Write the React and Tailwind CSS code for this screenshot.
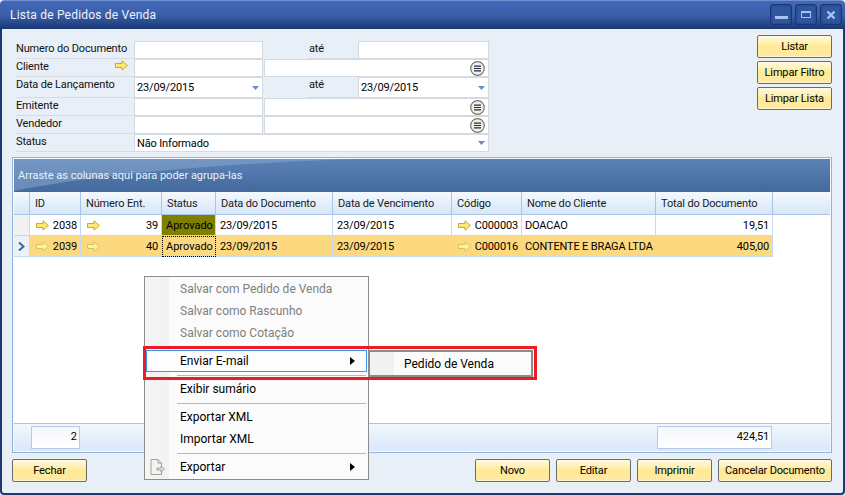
const font = { fontFamily: '"Roboto", "Liberation Sans", sans-serif' };

function Arrow({ pale = false, className = "" }) {
  return (
    <svg width="13" height="11" viewBox="0 0 13 11" className={"shrink-0 " + className}>
      <path
        d="M0.5 3.5H7V0.8L12.4 5.5L7 10.2V7.5H0.5Z"
        fill={pale ? "#fff0a8" : "#ffe873"}
        stroke={pale ? "#d8c25a" : "#c8ab2c"}
        strokeWidth="1"
      />
    </svg>
  );
}

function Caret() {
  return (
    <svg width="7" height="4" viewBox="0 0 7 4" className="shrink-0">
      <path d="M0 0H7L3.5 4Z" fill="#6a8cc4" />
    </svg>
  );
}

function ListBtn() {
  return (
    <svg width="15" height="15" viewBox="0 0 15 15" className="shrink-0">
      <circle cx="7.5" cy="7.5" r="6.8" fill="#f2efe3" stroke="#77766c" strokeWidth="1.2" />
      <path d="M4 5.2H11M4 7.5H11M4 9.8H11" stroke="#1c2d50" strokeWidth="1.2" />
    </svg>
  );
}

function Input({ w, children, caret, list, ml = "", textClass = "pt-px" }) {
  return (
    <div className={`${w} ${ml} h-full flex items-center bg-white border border-[#d3dae2] pl-[2px] pr-[3px] shrink-0 text-black text-[11px] tracking-[-0.15px]`}>
      <span className={`flex-1 truncate leading-none ${textClass}`}>{children}</span>
      {caret && <Caret />}
      {list && <ListBtn />}
    </div>
  );
}

function Label({ children, w = "w-[118px]", arrow, className = "" }) {
  return (
    <div className={`${w} shrink-0 h-full flex border-b border-[#d5dce3] pt-px text-[#111] text-[11px] tracking-[-0.15px] leading-[14px] ${className}`}>
      <span className="flex-1 truncate">{children}</span>
      {arrow && <Arrow className="mr-[6px]" />}
    </div>
  );
}

function Btn({ children, w = "w-[75px]" }) {
  return (
    <button className={`${w} h-[23px] shrink-0 rounded-[2px] border border-[#6c6c6c] bg-gradient-to-b from-[#fffbe3] via-[#ffe995] to-[#ffeaa6] shadow-[inset_0_-1px_0_#fff4c8] text-[11px] tracking-[-0.15px] text-black leading-none`}>
      {children}
    </button>
  );
}

function WinBtn({ children }) {
  return (
    <div className="w-[22px] h-[21px] rounded-[3px] border border-[#1b3672] bg-[#2f56a0] shadow-[inset_0_0_2px_#1b3672] flex items-center justify-center">
      {children}
    </div>
  );
}

const cols = "grid grid-cols-[16px_51px_81px_54px_117px_119px_70px_134px_117px_57px]";
const headers = ["", "ID", "Número Ent.", "Status", "Data do Documento", "Data de Vencimento", "Código", "Nome do Cliente", "Total do Documento", ""];

function Cell({ children, right, dotted, bg = "", className = "px-[3px]" }) {
  return (
    <div className={`h-[21px] flex items-center min-w-0 border-r border-b border-[#c8d9ef] text-[11px] tracking-[-0.15px] text-black leading-none whitespace-nowrap ${right ? "justify-end" : ""} ${bg} ${dotted ? "outline-1 outline-dotted outline-black -outline-offset-1" : ""} ${className}`}>
      {children}
    </div>
  );
}

function Row({ selected, id, num, code, name, total, date }) {
  const bg = selected ? "bg-[#fcd97f]" : "bg-white";
  const arrowCell = "justify-between pl-[6px] pr-[3px]";
  return (
    <div className={cols}>
      <div className={`h-[21px] border-r border-b border-[#c8d9ef] flex items-center justify-center ${selected ? "bg-[#eaf1f9]" : "bg-[#f1f1f1]"}`}>
        {selected && (
          <svg width="7" height="9" viewBox="0 0 7 9"><path d="M1 0.5L5.5 4.5L1 8.5" fill="none" stroke="#3e659c" strokeWidth="2" /></svg>
        )}
      </div>
      <Cell bg={bg} className={arrowCell}><Arrow pale={selected} /><span>{id}</span></Cell>
      <Cell bg={bg} className={arrowCell}><Arrow pale={selected} /><span>{num}</span></Cell>
      <Cell bg={selected ? "bg-[#fcd97f]" : "bg-[#7f7f00]"} dotted={selected} className="pl-[4px]">
        <span className="tracking-[0px]">Aprovado</span>
      </Cell>
      <Cell bg={bg} className="pl-[4px]">{date}</Cell>
      <Cell bg={bg} className="pl-[4px]">{date}</Cell>
      <Cell bg={bg} className={arrowCell}><Arrow pale={selected} /><span>{code}</span></Cell>
      <Cell bg={bg}>{name}</Cell>
      <Cell bg={bg} right>{total}</Cell>
    </div>
  );
}

function MenuItem({ children, disabled, sub, icon }) {
  return (
    <div className={`h-[22px] flex items-center pl-[35px] pr-[13px] text-[12px] leading-none relative ${disabled ? "text-[#7f7f7f] pt-px" : "text-black"}`}>
      {icon && <div className="absolute left-[5px] top-[3px]">{icon}</div>}
      <span className="flex-1">{children}</span>
      {sub && <svg width="5" height="8" viewBox="0 0 5 8"><path d="M0 0L5 4L0 8Z" fill="#000" /></svg>}
    </div>
  );
}

function Sep({ className = "" }) {
  return <div className={`h-px ml-[32px] mr-[2px] bg-[#b8b8b8] ${className}`} />;
}

export default function App() {
  return (
    <div style={font} className="w-[845px] h-[495px] relative overflow-hidden bg-white flex flex-col rounded-t-[4px]">
      <div className="h-[29px] shrink-0 bg-gradient-to-b from-[#4268b8] via-[#3a5fa9] to-[#1a3775] border-t border-[#6e8fd0] flex items-center pl-[10px] pr-[3px] rounded-t-[4px]">
        <span className="flex-1 text-[#eef3fb] text-[12px] tracking-[0.2px]">Lista de Pedidos de Venda</span>
        <div className="flex gap-[3px] mt-[-1px]">
          <WinBtn><div className="w-[13px] h-[3px] bg-[#a9c2f0] mt-[6px]" /></WinBtn>
          <WinBtn><div className="w-[10px] h-[7px] border border-[#a9c2f0] border-t-2" /></WinBtn>
          <WinBtn>
            <svg width="10" height="10" viewBox="0 0 10 10"><path d="M1.5 1.5L8.5 8.5M8.5 1.5L1.5 8.5" stroke="#a9c2f0" strokeWidth="2.4" /></svg>
          </WinBtn>
        </div>
      </div>

      <div className="flex-1 flex flex-col min-h-0 bg-[#e9eff6] border-x-2 border-b-2 border-[#1f3a70] rounded-b-[4px] pl-[10px] pr-[11px]">
        <div className="h-[128px] shrink-0 flex">
          <div className="w-[477px] pl-[4px] pt-[12px] flex flex-col shrink-0">
            <div className="h-[18px] flex">
              <Label>Numero do Documento</Label>
              <Input w="w-[129px]" />
              <Label w="w-[51px]" className="ml-[44px] pl-[2px]">até</Label>
              <Input w="w-[131px]" />
            </div>
            <div className="h-[18px] flex">
              <Label arrow>Cliente</Label>
              <Input w="w-[129px]" />
              <Input w="w-[225px]" ml="ml-[1px]" list />
            </div>
            <div className="h-[21px] flex">
              <Label>Data de Lançamento</Label>
              <Input w="w-[129px]" caret textClass="pb-px">23/09/2015</Input>
              <Label w="w-[51px]" className="ml-[44px] pl-[2px]">até</Label>
              <Input w="w-[131px]" caret textClass="pb-px">23/09/2015</Input>
            </div>
            <div className="h-[18px] flex">
              <Label>Emitente</Label>
              <Input w="w-[129px]" />
              <Input w="w-[225px]" ml="ml-[1px]" list />
            </div>
            <div className="h-[18px] flex">
              <Label>Vendedor</Label>
              <Input w="w-[129px]" />
              <Input w="w-[225px]" ml="ml-[1px]" list />
            </div>
            <div className="h-[18px] flex">
              <Label>Status</Label>
              <Input w="w-[355px]" caret>Não Informado</Input>
            </div>
          </div>
          <div className="ml-auto pt-[6px] flex flex-col gap-[3px]">
            <Btn>Listar</Btn>
            <Btn>Limpar Filtro</Btn>
            <Btn>Limpar Lista</Btn>
          </div>
        </div>

        <div className="h-[296px] shrink-0 border border-[#94b3d8] p-px bg-[#f4f8fc] flex flex-col">
          <div className="h-[33px] shrink-0 relative overflow-hidden bg-gradient-to-b from-[#5b82b6] to-[#44699c] flex items-center pl-[4px]">
            <svg className="absolute left-0 top-0" width="340" height="33" viewBox="0 0 340 33">
              <path d="M0 0H340C220 4 90 14 0 32Z" fill="#86a5cc" fillOpacity="0.55" />
            </svg>
            <span className="relative text-[#eaf1fa] text-[11px] mt-[1px]">Arraste as colunas aqui para poder agrupa-las</span>
          </div>
          <div className="flex-1 min-h-0 bg-white flex flex-col">
            <div className={`${cols} h-[23px] shrink-0 bg-gradient-to-b from-[#f4f9fe] to-[#d6e6f9] border-b border-[#a9c5e6]`}>
              {headers.map((h, i) => (
                <div key={i} className={`flex items-center px-[5px] text-[11px] tracking-[-0.15px] text-[#1a1a1a] leading-none whitespace-nowrap ${i < 9 ? "border-r border-[#a9c5e6]" : ""}`}>{h}</div>
              ))}
            </div>
            <Row id="2038" num="39" code="C000003" name="DOACAO" total="19,51" date="23/09/2015" />
            <Row selected id="2039" num="40" code="C000016" name="CONTENTE E BRAGA LTDA" total="405,00" date="23/09/2015" />
            <div className="flex-1" />
            <div className="h-[28px] shrink-0 flex items-center bg-gradient-to-b from-[#f2f7fd] to-[#d9e8fb] border-t border-[#a9c5e6]">
              <div className="ml-[17px] w-[49px] h-[23px] flex items-center justify-end pr-[2px] border border-[#b5cbe8] bg-gradient-to-b from-[#f4f7fc] to-white text-[11px] text-black">2</div>
              <div className="ml-[577px] w-[115px] h-[23px] flex items-center justify-end pr-[2px] border border-[#b5cbe8] bg-gradient-to-b from-[#f4f7fc] to-white text-[11px] tracking-[-0.15px] text-black">424,51</div>
            </div>
          </div>
        </div>

        <div className="flex-1 flex items-start pt-[6px] gap-[6px]">
          <Btn>Fechar</Btn>
          <div className="flex-1" />
          <Btn>Novo</Btn>
          <Btn>Editar</Btn>
          <Btn>Imprimir</Btn>
          <Btn w="w-[114px]">Cancelar Documento</Btn>
        </div>
      </div>

      <div className="absolute left-[144px] top-[276px] w-[225px] h-[204px] border border-[#8c8c8c] bg-[#fbfbfb]">
        <div className="absolute left-0 top-0 bottom-0 w-[24px] bg-gradient-to-r from-[#f6f6f6] to-[#f1f1f1]" />
        <div className="relative">
          <MenuItem disabled>Salvar com Pedido de Venda</MenuItem>
          <MenuItem disabled>Salvar como Rascunho</MenuItem>
          <MenuItem disabled>Salvar como Cotação</MenuItem>
          <div className="h-[7px]" />
          <div className="mx-px h-[22px] border border-[#3d93e8] bg-[#fdfdfd] flex items-center pl-[33px] pr-[11px] text-[12px] text-black leading-none">
            <span className="flex-1">Enviar E-mail</span>
            <svg width="5" height="8" viewBox="0 0 5 8"><path d="M0 0L5 4L0 8Z" fill="#000" /></svg>
          </div>
          <Sep className="mt-[3px] mb-[2px]" />
          <MenuItem>Exibir sumário</MenuItem>
          <Sep className="mt-[3px] mb-[2px]" />
          <MenuItem>Exportar XML</MenuItem>
          <MenuItem>Importar XML</MenuItem>
          <Sep className="mt-[3px] mb-[2px]" />
          <MenuItem
            sub
            icon={
              <svg width="15" height="16" viewBox="0 0 15 16">
                <path d="M1 0.5H8L11.5 4V15.5H1Z" fill="#f4f4ee" stroke="#9aa39a" />
                <path d="M8 0.5V4H11.5" fill="#dcdcd4" stroke="#9aa39a" />
                <path d="M7 9H11V7L14.5 10L11 13V11H7Z" fill="#e2e6de" stroke="#8d958d" strokeWidth="0.8" />
              </svg>
            }
          >
            Exportar
          </MenuItem>
        </div>
      </div>

      <div className="absolute left-[368px] top-[350px] w-[165px] h-[27px] border-2 border-[#8c8c8c] bg-[#fbfbfb] flex items-center">
        <div className="absolute left-0 top-0 bottom-0 w-[24px] bg-[#f1f1f1]" />
        <span className="relative ml-[34px] text-[12px] text-black">Pedido de Venda</span>
      </div>

      <div className="absolute left-[143px] top-[346px] w-[394px] h-[34px] border-[3px] border-[#ec1c24]" />
    </div>
  );
}
